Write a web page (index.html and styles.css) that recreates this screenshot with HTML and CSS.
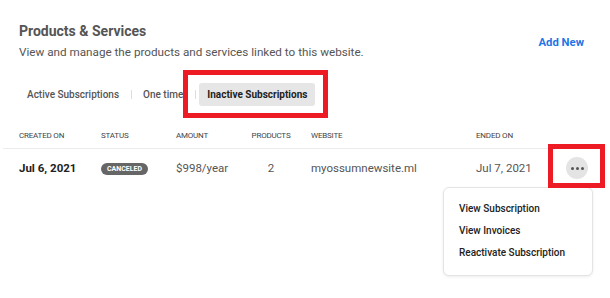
FILE: index.html
```html
<!DOCTYPE html>
<html lang="en">
<head>
  <meta charset="UTF-8" />
  <meta name="viewport" content="width=device-width, initial-scale=1.0"/>
  <title>Products &amp; Services</title>
  <link rel="stylesheet" href="styles.css">
</head>
<body>
  <div class="page">
    <div class="page-head">
      <div>
        <h1>Products &amp; Services</h1>
        <p class="subtitle">View and manage the products and services linked to this website.</p>
      </div>
      <a class="add-new" href="#">Add New</a>
    </div>

    <!-- Tabs -->
    <div class="tabs">
      <span class="tab">Active Subscriptions</span>
      <span class="tab-sep"></span>
      <span class="tab">One time</span>
      <span class="tab-sep"></span>
      <span class="tab active">Inactive Subscriptions</span>
    </div>

    <div class="table">
      <div class="row head">
        <div>Created On</div>
        <div>Status</div>
        <div>Amount</div>
        <div class="center">Products</div>
        <div class="site">Website</div>
        <div>Ended On</div>
        <div></div>
      </div>
      <div class="row">
        <div class="date">Jul 6, 2021</div>
        <div><span class="badge">Canceled</span></div>
        <div>$998/year</div>
        <div class="center">2</div>
        <div class="site">myossumnewsite.ml</div>
        <div>Jul 7, 2021</div>
        <div class="actions">
          <button class="more-btn"><span></span><span></span><span></span></button>
          <div class="menu">
            <div class="menu-item">View Subscription</div>
            <div class="menu-item">View Invoices</div>
            <div class="menu-item">Reactivate Subscription</div>
          </div>
        </div>
      </div>
    </div>

    <!-- highlight marks -->
    <div class="mark mark-tab"></div>
    <div class="mark mark-btn"></div>
  </div>
</body>
</html>
```

FILE: styles.css
```css
body {
  margin: 0;
  font-family: Roboto, "Liberation Sans", sans-serif;
  color: #333;
  background: #fff;
}

.page {
  position: relative;
  width: 610px;
  height: 298px;
  padding-top: 23px;
  box-sizing: border-box;
  overflow: hidden;
}

.page-head {
  display: flex;
  justify-content: space-between;
  align-items: flex-start;
  padding: 0 26px 0 19px;
}

h1 {
  margin: 0;
  font-size: 14px;
  line-height: 17px;
  font-weight: 700;
  color: #555;
}

.subtitle {
  margin: 4px 0 0;
  font-size: 11.7px;
  line-height: 16px;
  color: #555;
}

.add-new {
  margin-top: 12px;
  font-size: 11.3px;
  line-height: 15px;
  font-weight: 700;
  color: #1f74e6;
  text-decoration: none;
}

.tabs {
  display: flex;
  align-items: center;
  margin: 23px 0 0 19px;
}

.tab {
  padding: 0 8px;
  height: 23px;
  line-height: 23px;
  font-size: 10px;
  font-weight: 500;
  color: #555;
  border-radius: 3px;
}

.tab.active {
  background: #e6e6e6;
  color: #222;
  font-weight: 700;
}

.tab-sep {
  width: 1px;
  height: 9px;
  background: #ddd;
  margin: 0 3px 0 4px;
}

.table {
  margin: 20px 5px 0 3px;
}

.row {
  display: grid;
  grid-template-columns: 82px 75px 75px 40px 185px 80px 1fr;
  align-items: center;
  padding-left: 16px;
  font-size: 11.5px;
  color: #555;
}

.row.head {
  padding-top: 4px;
  padding-bottom: 7px;
  border-bottom: 1px solid #ececec;
  font-size: 8px;
  line-height: 11px;
  text-transform: uppercase;
  color: #444;
  letter-spacing: -0.2px;
}

.row:not(.head) {
  padding-top: 8px;
  padding-bottom: 8px;
}

.center {
  text-align: center;
}

.site {
  padding-left: 20px;
}

.date {
  font-weight: 700;
  color: #222;
}

.badge {
  display: inline-block;
  width: 47px;
  height: 12px;
  line-height: 12px;
  border-radius: 6px;
  background: #666;
  color: #fff;
  font-size: 7px;
  font-weight: 700;
  text-align: center;
  text-transform: uppercase;
  vertical-align: middle;
}

.actions {
  position: relative;
  padding-left: 10px;
  height: 22px;
}

.more-btn {
  display: flex;
  align-items: center;
  justify-content: center;
  gap: 2px;
  width: 22px;
  height: 22px;
  padding: 0;
  border: none;
  border-radius: 50%;
  background: #e4e4e4;
  cursor: pointer;
}

.more-btn span {
  width: 3px;
  height: 3px;
  border-radius: 50%;
  background: #555;
}

.menu {
  position: absolute;
  top: 30px;
  right: 12px;
  width: 150px;
  box-sizing: border-box;
  padding: 10px 0 11px;
  background: #fff;
  border: 1px solid #e4e4e4;
  border-radius: 6px;
  box-shadow: 0 1px 3px rgba(0, 0, 0, 0.08);
}

.menu-item {
  padding-left: 15px;
  line-height: 22px;
  font-size: 10px;
  font-weight: 500;
  color: #222;
  white-space: nowrap;
}

.mark {
  position: absolute;
  border: 5px solid #ed1c24;
  box-sizing: border-box;
}

.mark-tab {
  left: 183px;
  top: 70px;
  width: 145px;
  height: 48px;
}

.mark-btn {
  left: 548px;
  top: 144px;
  width: 57px;
  height: 44px;
}
```
